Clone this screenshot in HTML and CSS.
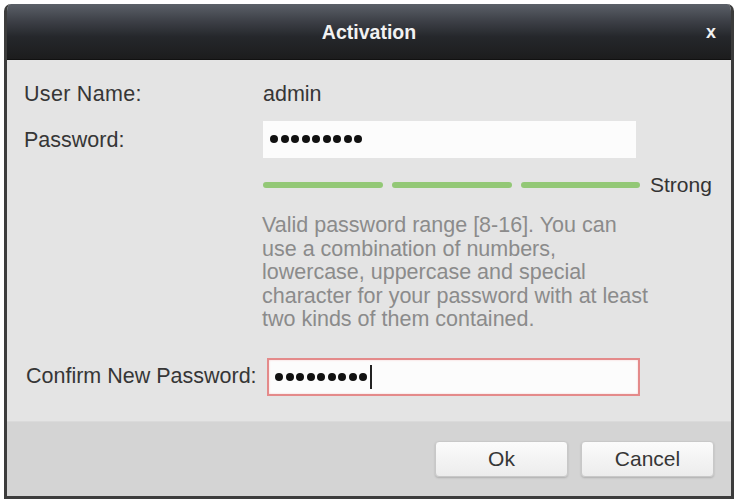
FILE: index.html
```html
<!DOCTYPE html>
<html>
<head>
<meta charset="utf-8">
<link rel="stylesheet" href="styles.css">
</head>
<body>
<div class="dialog">
  <div class="titlebar">
    <span class="title">Activation</span>
    <span class="close">x</span>
  </div>
  <div class="content">
    <div class="row row-user">
      <span class="label">User Name:</span>
      <span class="value">admin</span>
    </div>
    <div class="row row-pass">
      <span class="label">Password:</span>
      <div class="input">
        <span class="dot"></span><span class="dot"></span><span class="dot"></span><span class="dot"></span><span class="dot"></span><span class="dot"></span><span class="dot"></span><span class="dot"></span><span class="dot"></span>
      </div>
    </div>
    <div class="strength">
      <span class="seg"></span><span class="seg"></span><span class="seg"></span>
      <span class="strong">Strong</span>
    </div>
    <p class="hint">Valid password range [8-16]. You can<br>use a combination of numbers,<br>lowercase, uppercase and special<br>character for your password with at least<br>two kinds of them contained.</p>
    <div class="row row-confirm">
      <span class="label">Confirm New Password:</span>
      <div class="input input-error">
        <span class="dot"></span><span class="dot"></span><span class="dot"></span><span class="dot"></span><span class="dot"></span><span class="dot"></span><span class="dot"></span><span class="dot"></span><span class="dot"></span><span class="caret"></span>
      </div>
    </div>
  </div>
  <div class="footer">
    <button class="btn">Ok</button>
    <button class="btn">Cancel</button>
  </div>
</div>
</body>
</html>
```
FILE: styles.css
```css
* { box-sizing: border-box; }
html, body { margin: 0; padding: 0; background: #ffffff; }
body { font-family: "Liberation Sans", Arial, sans-serif; }

.dialog {
  margin: 4px 3px 0 4px;
  width: 730px;
  height: 495px;
  display: flex;
  flex-direction: column;
  border-left: 3px solid #3c3c3c;
  border-right: 3px solid #3c3c3c;
  border-bottom: 3px solid #3c3c3c;
  border-radius: 7px 7px 0 0;
  overflow: hidden;
  background: #e3e3e3;
}

.titlebar {
  height: 56px;
  flex: none;
  display: flex;
  align-items: center;
  justify-content: center;
  position: relative;
  background: linear-gradient(#5b6068 0%, #3e4148 30%, #25272b 60%, #1c1c1d 100%);
  border-bottom: 1px solid #111;
}
.title {
  color: #f2f2f2;
  font-weight: bold;
  font-size: 19.5px;
  margin-left: 0;
  margin-top: 2px;
}
.close {
  position: absolute;
  right: 15px;
  top: 18px;
  color: #f0f0f0;
  font-weight: bold;
  font-size: 18px;
  line-height: 20px;
}

.content {
  flex: 1;
  padding: 17px 0 0 17px;
  background: #e4e4e4;
  color: #363636;
  font-size: 21.5px;
}

.row { display: flex; align-items: center; }
.label { width: 239px; flex: none; }
.row-user { height: 34px; }
.row-user .label { letter-spacing: 0.3px; }
.row-pass { margin-top: 9px; height: 38px; }
.row-pass .label { margin-top: 3px; }

.input {
  width: 373px;
  height: 37px;
  background: #fcfcfc;
  display: flex;
  align-items: center;
  padding-left: 7px;
  gap: 2.5px;
}
.dot {
  width: 8px;
  height: 8px;
  border-radius: 50%;
  background: #111;
  flex: none;
}
.input-error {
  border: 2px solid #e48a8a;
  box-shadow: inset 0 0 2px #f3c4c4;
  margin-left: 2px;
  height: 38px;
  padding-left: 6px;
}
.caret {
  width: 2px;
  height: 24px;
  background: #222;
  margin-left: 0;
}

.strength {
  margin: 17px 0 0 239px;
  display: flex;
  align-items: center;
  gap: 9px;
  height: 20px;
}
.seg {
  width: 120px;
  height: 6px;
  border-radius: 3px;
  background: #93c876;
}
.seg:nth-child(3) { width: 119px; }
.strong { margin-left: 1px; color: #333; font-size: 21px; }

.hint {
  margin: 19px 0 0 238px;
  color: #8b8b8b;
  font-size: 21.5px;
  line-height: 23.5px;
  white-space: nowrap;
}

.row-confirm { margin-top: 26px; height: 38px; }
.row-confirm .label { margin-left: 2px; width: 239px; }

.footer {
  height: 75px;
  flex: none;
  background: #d4d4d4;
  border-top: 1px solid #dadada;
  display: flex;
  justify-content: flex-end;
  align-items: center;
  gap: 13px;
  padding: 0 17px 0 0;
}
.btn {
  width: 133px;
  height: 36px;
  border: 1px solid #c8c8c8;
  border-radius: 4px;
  background: linear-gradient(#fbfbfb, #ececec);
  box-shadow: 0 1px 2px rgba(0,0,0,0.18);
  font-family: "Liberation Sans", Arial, sans-serif;
  font-size: 21px;
  color: #363636;
}
```
